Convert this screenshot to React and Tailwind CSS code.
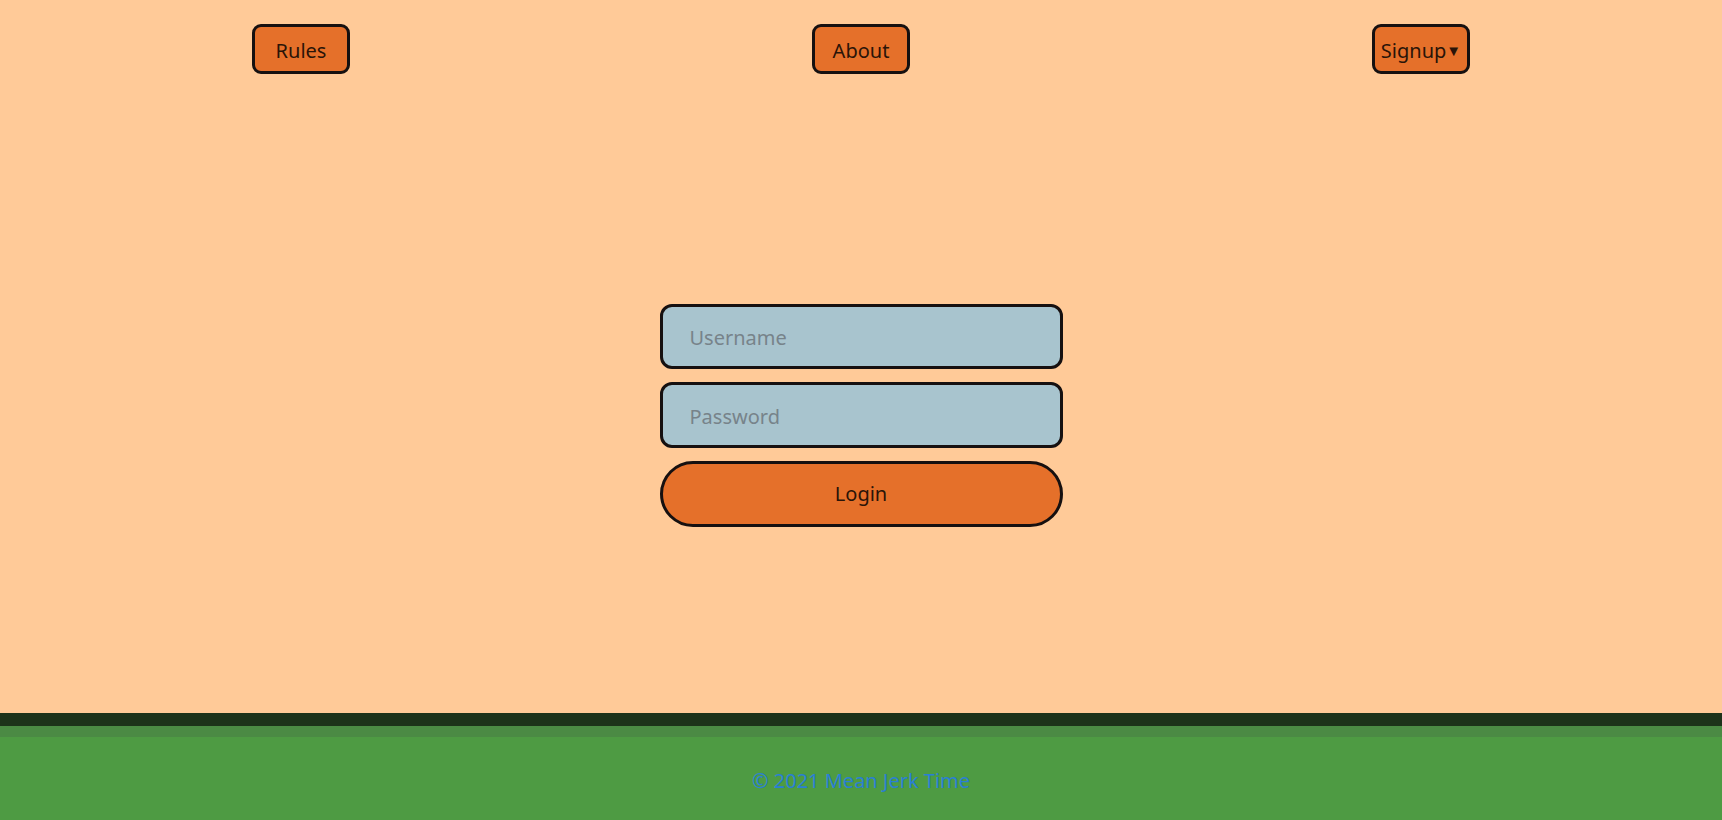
const NavButton = ({ children }) => (
  <button className="h-[50px] w-[98px] rounded-[9px] border-[3px] border-[#161010] bg-[#e5702a] pt-[3px] text-[20px] text-[#2a1408]">
    {children}
  </button>
);

export default function App() {
  return (
    <div
      className="flex min-h-screen flex-col bg-[#ffca98]"
      style={{ fontFamily: '"Noto Sans", "Open Sans", sans-serif' }}
    >
      {/* Nav */}
      <nav className="mx-[21px] grid grid-cols-3 pt-[24px]">
        <div className="flex justify-center">
          <NavButton>Rules</NavButton>
        </div>
        <div className="flex justify-center">
          <NavButton>About</NavButton>
        </div>
        <div className="flex justify-center">
          <NavButton>
            <span className="inline-flex items-center">
              Signup<span className="text-[15px] leading-none">▼</span>
            </span>
          </NavButton>
        </div>
      </nav>

      {/* Login form */}
      <main className="flex flex-1 justify-center pt-[230px]">
        <form className="flex w-[403px] flex-col gap-[13px]" onSubmit={(e) => e.preventDefault()}>
          <input
            type="text"
            placeholder="Username"
            className="h-[65px] rounded-[12px] border-[3px] border-[#161010] bg-[#a8c4ce] px-[27px] pt-[2px] text-[20px] text-[#1a1a1a] outline-none placeholder:text-[#77838a]"
          />
          <input
            type="password"
            placeholder="Password"
            className="h-[66px] rounded-[12px] border-[3px] border-[#161010] bg-[#a8c4ce] px-[27px] pt-[2px] text-[20px] text-[#1a1a1a] outline-none placeholder:text-[#77838a]"
          />
          <button
            type="submit"
            className="h-[66px] rounded-full border-[3px] border-[#161010] bg-[#e5702a] text-[20px] text-[#2a1408]"
          >
            Login
          </button>
        </form>
      </main>

      {/* Footer */}
      <footer className="h-[107px] border-t-[13px] border-[#1d321a] bg-[#4e9b43]">
        <div className="h-[11px] bg-[#4b8a44]" />
        <p className="pt-[29px] text-center text-[20px] text-[#2a7fd4]">© 2021 Mean Jerk Time</p>
      </footer>
    </div>
  );
}
